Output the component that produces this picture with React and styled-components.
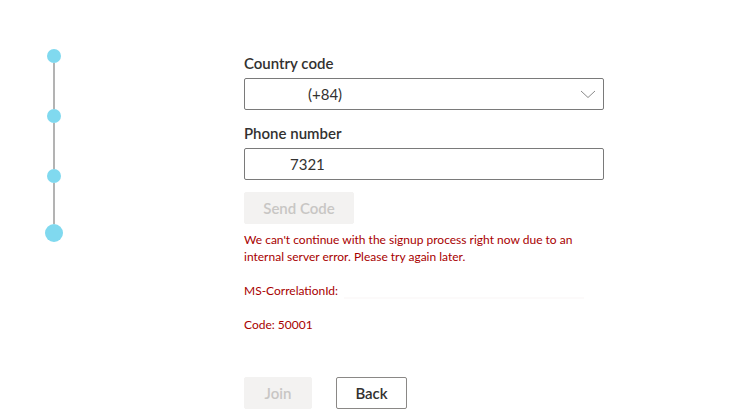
import React from 'react';
import styled, { createGlobalStyle } from 'styled-components';

const GlobalStyle = createGlobalStyle`
  html, body {
    margin: 0;
    padding: 0;
    background: #ffffff;
  }
  body {
    font-family: "Segoe UI", Lato, "Liberation Sans", sans-serif;
    color: #323130;
  }
`;

const Page = styled.div`
  display: flex;
  width: 755px;
  height: 419px;
  overflow: hidden;
`;

const StepperColumn = styled.div`
  width: 108px;
  padding-top: 49px;
  display: flex;
  flex-direction: column;
  align-items: center;
`;

const Dot = styled.div`
  width: ${p => p.$size}px;
  height: ${p => p.$size}px;
  border-radius: 50%;
  background: #80d9ef;
  flex-shrink: 0;
`;

const Connector = styled.div`
  width: 2px;
  height: ${p => p.$length}px;
  background: #b3b3b3;
`;

const Form = styled.div`
  margin-left: 136px;
  width: 360px;
  padding-top: 53px;
  display: flex;
  flex-direction: column;
`;

const Label = styled.label`
  font-size: 15px;
  font-weight: 600;
  line-height: 20px;
  margin-top: ${p => p.$top || 0}px;
  margin-bottom: 5px;
`;

const Field = styled.div`
  position: relative;
  display: flex;
  align-items: center;
  height: 32px;
  box-sizing: border-box;
  border: 1px solid #7a7a7a;
  border-radius: 2px;
  padding-left: ${p => p.$indent}px;
  font-size: 15px;
  color: #323130;
`;

const Chevron = styled.svg`
  position: absolute;
  right: 7px;
  top: 11px;
`;

const Button = styled.button`
  font-family: inherit;
  font-size: 15px;
  font-weight: 600;
  height: 32px;
  padding: 0;
  width: ${p => p.$width}px;
  border-radius: 2px;
  border: 1px solid ${p => (p.disabled ? '#f3f2f1' : '#8a8886')};
  background: ${p => (p.disabled ? '#f3f2f1' : '#ffffff')};
  color: ${p => (p.disabled ? '#c8c6c4' : '#323130')};
`;

const SendButton = styled(Button)`
  margin-top: 12px;
`;

const ErrorBlock = styled.div`
  margin-top: 7px;
  color: #a80000;
  font-size: 12px;
  line-height: 17px;
`;

const ErrorPara = styled.p`
  margin: 0 0 17px;
`;

const Redacted = styled.span`
  display: inline-block;
  width: 240px;
  height: 2px;
  margin-left: 6px;
  vertical-align: -4px;
  background: #fcfafa;
`;

const Actions = styled.div`
  display: flex;
  gap: 24px;
  margin-top: 27px;
`;

const steps = [
  { size: 14, after: 46 },
  { size: 14, after: 46 },
  { size: 14, after: 41 },
  { size: 18 },
];

export default function App() {
  return (
    <Page>
      <GlobalStyle />
      <StepperColumn>
        {steps.map((s, i) => (
          <React.Fragment key={i}>
            <Dot $size={s.size} />
            {s.after && <Connector $length={s.after} />}
          </React.Fragment>
        ))}
      </StepperColumn>

      <Form>
        <Label>Country code</Label>
        <Field $indent={63}>
          (+84)
          <Chevron width="16" height="9" viewBox="0 0 16 9">
            <polyline points="1,1 8,7.5 15,1" fill="none" stroke="#8a8a8a" strokeWidth="1" />
          </Chevron>
        </Field>

        <Label $top={13}>Phone number</Label>
        <Field $indent={45}>7321</Field>

        <SendButton disabled $width={110}>Send Code</SendButton>

        <ErrorBlock>
          <ErrorPara>
            We can't continue with the signup process right now due to an internal server error. Please try again later.
          </ErrorPara>
          <ErrorPara>
            MS-CorrelationId:<Redacted />
          </ErrorPara>
          <ErrorPara>Code: 50001</ErrorPara>
        </ErrorBlock>

        <Actions>
          <Button disabled $width={68}>Join</Button>
          <Button $width={71}>Back</Button>
        </Actions>
      </Form>
    </Page>
  );
}
